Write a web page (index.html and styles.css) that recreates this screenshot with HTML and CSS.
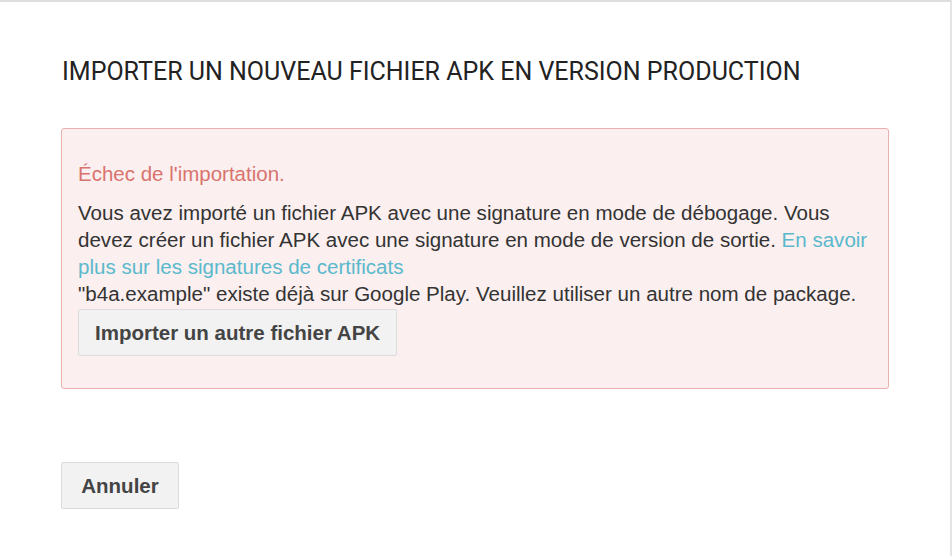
FILE: index.html
```html
<!DOCTYPE html>
<html lang="fr">
<head>
<meta charset="utf-8">
<title>Importer un nouveau fichier APK</title>
<link rel="stylesheet" href="styles.css">
</head>
<body>
<div class="panel">
  <h1 class="title">IMPORTER UN NOUVEAU FICHIER APK EN VERSION PRODUCTION</h1>
  <div class="alert">
    <p class="alert-head">Échec de l'importation.</p>
    <p class="alert-body">Vous avez importé un fichier APK avec une signature en mode de débogage. Vous devez créer un fichier APK avec une signature en mode de version de sortie. <a class="link" href="#">En savoir plus sur les signatures de certificats</a></p>
    <p class="alert-body">"b4a.example" existe déjà sur Google Play. Veuillez utiliser un autre nom de package.</p>
    <button class="btn btn-retry" type="button">Importer un autre fichier APK</button>
  </div>
  <div class="footer">
    <button class="btn btn-cancel" type="button">Annuler</button>
  </div>
</div>
</body>
</html>
```

FILE: styles.css
```css
html, body {
  margin: 0;
  padding: 0;
  background: #ffffff;
}
body {
  font-family: "Liberation Sans", Arial, sans-serif;
  color: #333333;
}
.panel {
  box-sizing: border-box;
  width: 952px;
  height: 556px;
  border-top: 2px solid #dedede;
  border-right: 2px solid #e4e4e4;
  padding: 0 62px 0 61px;
  background: #ffffff;
  overflow: hidden;
}
.title {
  margin: 55px 0 0 1px;
  font-family: Roboto, "Liberation Sans", sans-serif;
  font-weight: 400;
  font-size: 25px;
  line-height: 30px;
  color: #222222;
  white-space: nowrap;
}
.alert {
  margin-top: 41px;
  box-sizing: border-box;
  width: 828px;
  height: 261px;
  border: 1px solid #eab0ae;
  border-radius: 3px;
  background: #fbefef;
  padding: 31px 8px 0 16px;
}
.alert-head {
  margin: 0 0 12px 0;
  font-size: 20.5px;
  line-height: 27px;
  color: #d9736e;
}
.alert-body {
  margin: 0;
  font-size: 20.55px;
  line-height: 27px;
  color: #333333;
}
.link {
  color: #5ab9cc;
  text-decoration: none;
}
.btn {
  display: inline-block;
  box-sizing: border-box;
  height: 47px;
  padding: 0 16px;
  border: 1px solid #dcdcdc;
  border-radius: 2px;
  background: #f2f2f2;
  font-family: "Liberation Sans", Arial, sans-serif;
  font-weight: 700;
  font-size: 20.5px;
  color: #444444;
}
.btn-retry {
  margin-top: 2px;
}
.footer {
  margin-top: 73px;
}
.btn-cancel {
  width: 118px;
  padding: 0;
}
```
